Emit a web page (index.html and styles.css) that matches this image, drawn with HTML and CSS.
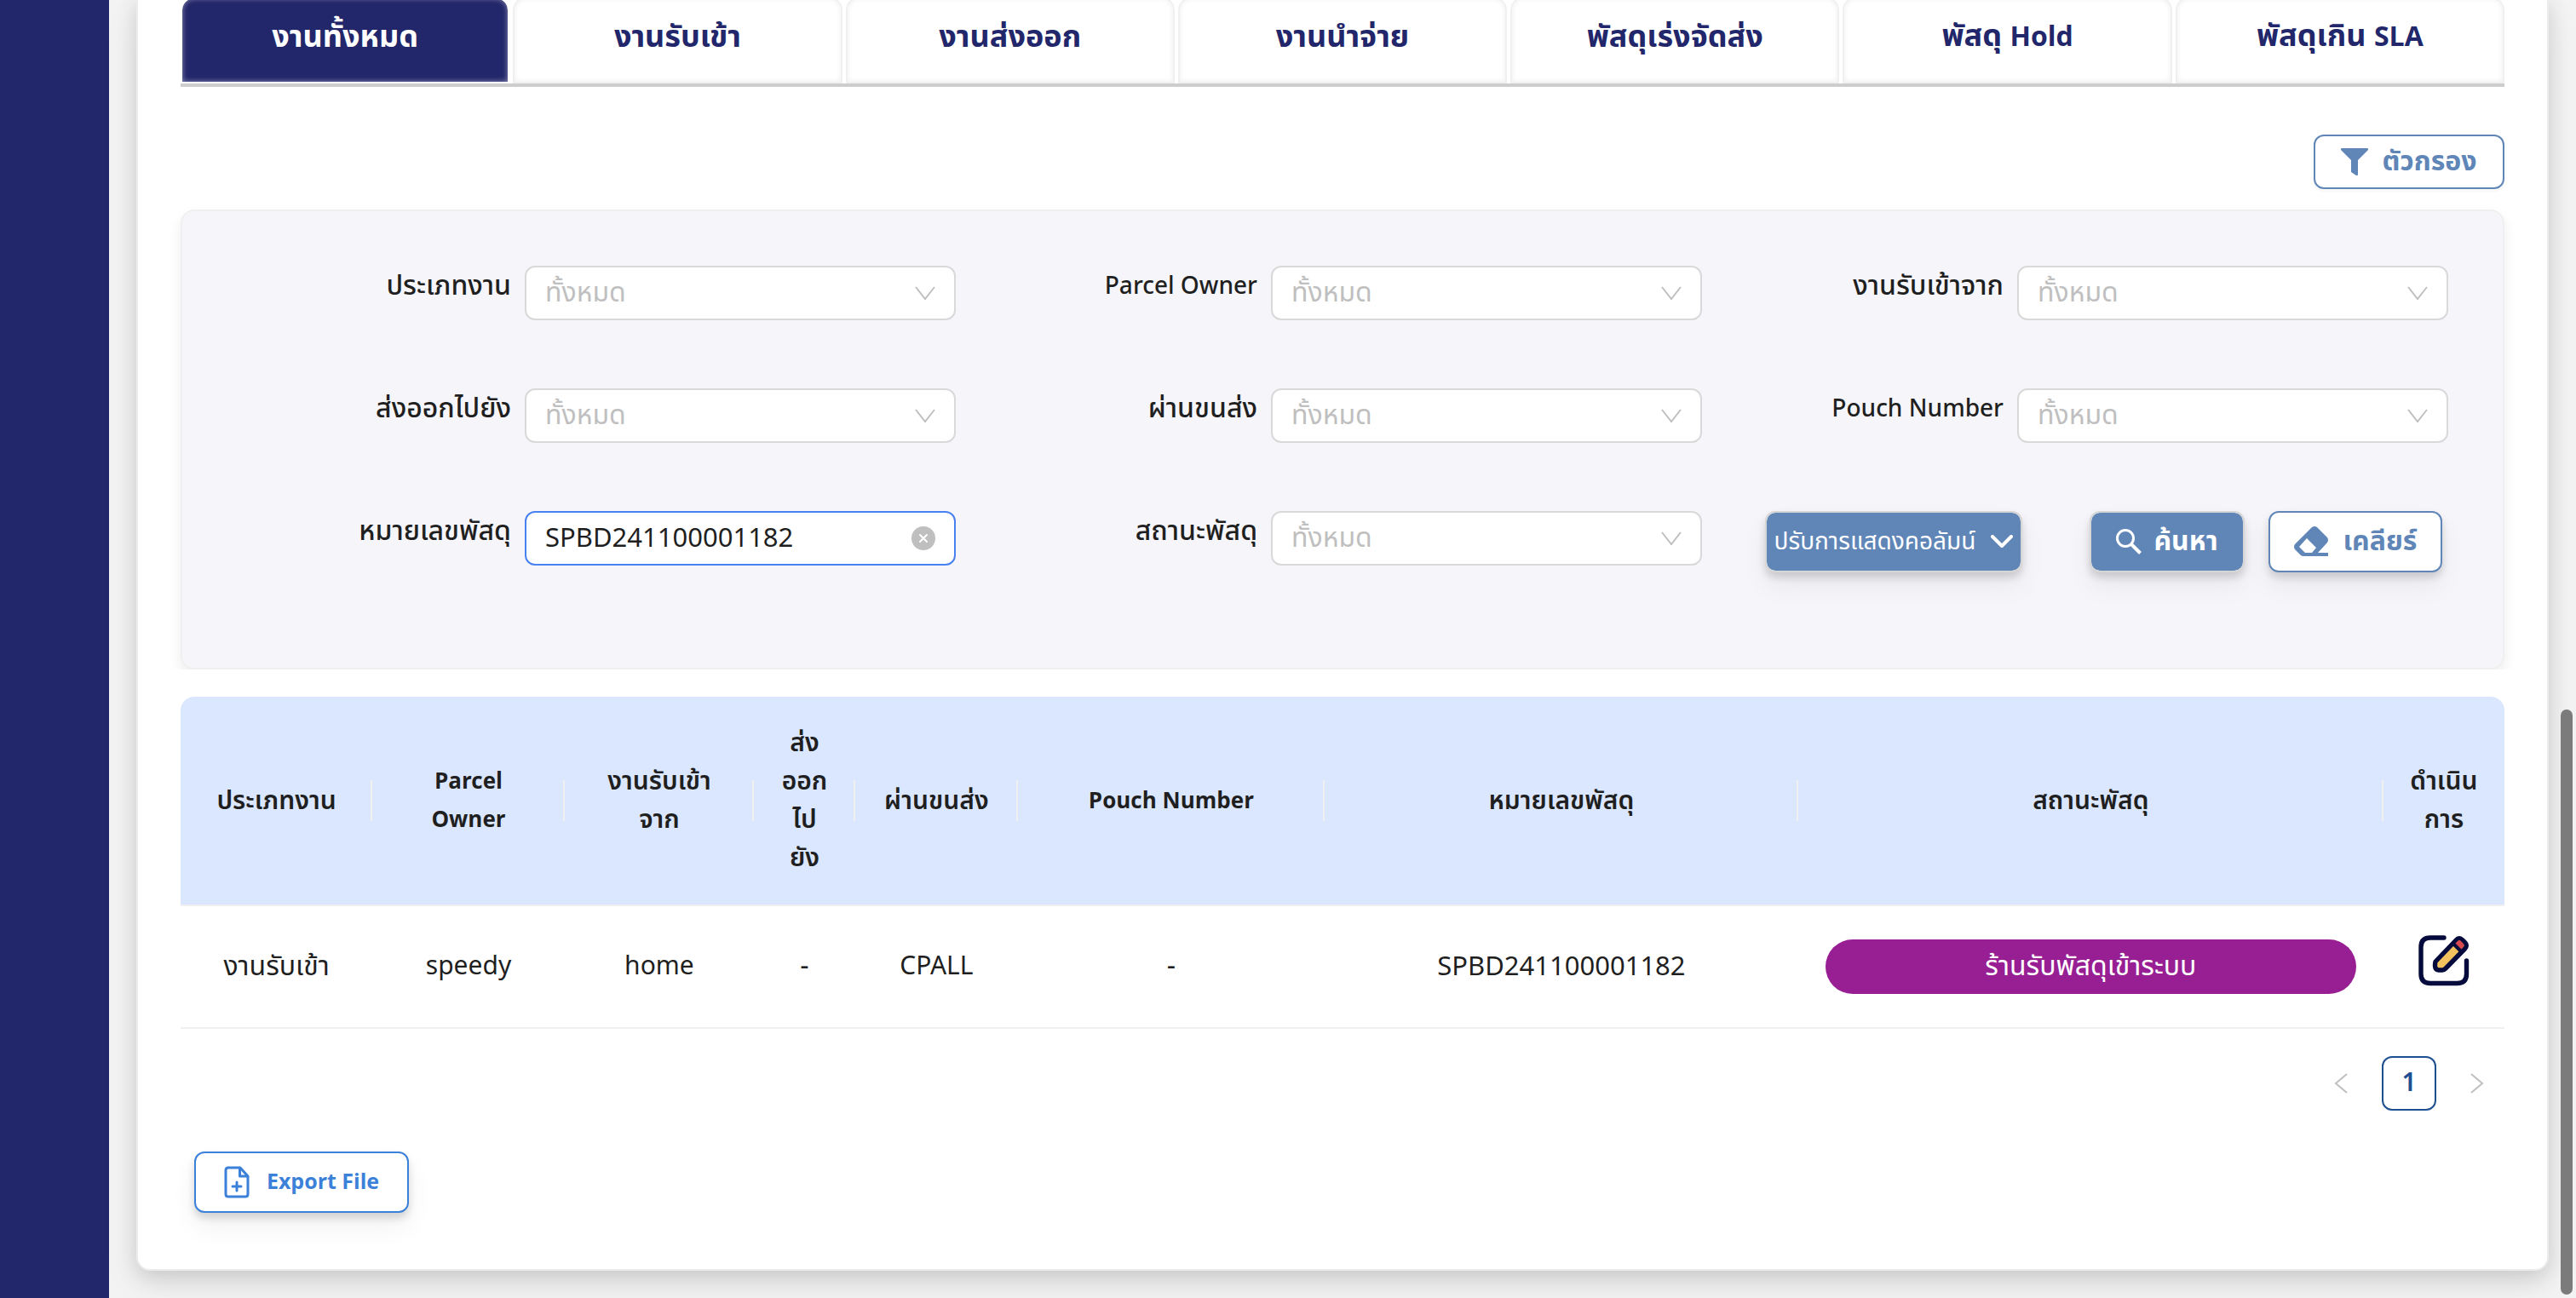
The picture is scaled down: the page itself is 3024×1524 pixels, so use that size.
FILE: index.html
```
<!DOCTYPE html>
<html lang="th">
<head>
<meta charset="utf-8">
<meta name="viewport" content="width=device-width, initial-scale=1">
<title>งานทั้งหมด</title>
<link rel="stylesheet" href="styles.css">
</head>
<body>
<svg class="sprite" aria-hidden="true">
  <symbol id="chevron" viewBox="0 0 24 16"><path d="M1 1 12 15 23 1" fill="none" stroke="currentColor" stroke-width="2"/></symbol>
</svg>
<div class="layout">
  <aside class="sidebar"></aside>
  <main class="content">
    <section class="card">
      <nav class="tabs">
        <button class="tab tab-active" type="button">งานทั้งหมด</button>
        <button class="tab" type="button">งานรับเข้า</button>
        <button class="tab" type="button">งานส่งออก</button>
        <button class="tab" type="button">งานนำจ่าย</button>
        <button class="tab" type="button">พัสดุเร่งจัดส่ง</button>
        <button class="tab" type="button">พัสดุ <span class="latin">Hold</span></button>
        <button class="tab" type="button">พัสดุเกิน <span class="latin">SLA</span></button>
      </nav>

      <div class="toolbar">
        <button class="btn btn-filter" type="button">
          <svg width="32" height="32" viewBox="0 0 32 32"><path fill="currentColor" d="M1 0h30q1 0 1 1v1L20 14v17q0 1-1 1h-1l-6-4V14L0 2V1q0-1 1-1z"/></svg>
          <span>ตัวกรอง</span>
        </button>
      </div>

      <form class="filters">
        <div class="field">
          <label for="job">ประเภทงาน</label>
          <div class="control"><select id="job"><option>ทั้งหมด</option></select><svg class="chevron"><use href="#chevron"/></svg></div>
        </div>
        <div class="field">
          <label for="owner" class="label-latin">Parcel Owner</label>
          <div class="control"><select id="owner"><option>ทั้งหมด</option></select><svg class="chevron"><use href="#chevron"/></svg></div>
        </div>
        <div class="field">
          <label for="from">งานรับเข้าจาก</label>
          <div class="control"><select id="from"><option>ทั้งหมด</option></select><svg class="chevron"><use href="#chevron"/></svg></div>
        </div>
        <div class="field">
          <label for="to">ส่งออกไปยัง</label>
          <div class="control"><select id="to"><option>ทั้งหมด</option></select><svg class="chevron"><use href="#chevron"/></svg></div>
        </div>
        <div class="field">
          <label for="via">ผ่านขนส่ง</label>
          <div class="control"><select id="via"><option>ทั้งหมด</option></select><svg class="chevron"><use href="#chevron"/></svg></div>
        </div>
        <div class="field">
          <label for="pouch" class="label-latin">Pouch Number</label>
          <div class="control"><select id="pouch"><option>ทั้งหมด</option></select><svg class="chevron"><use href="#chevron"/></svg></div>
        </div>
        <div class="field">
          <label for="parcel">หมายเลขพัสดุ</label>
          <div class="control control-focus">
            <input id="parcel" type="text" value="SPBD241100001182">
            <button class="clear" type="button" aria-label="ล้าง"><svg width="28" height="28" viewBox="0 0 28 28"><circle cx="14" cy="14" r="14" fill="#bfbfbf"/><path d="m10 10 8 8m0-8-8 8" stroke="#fff" stroke-width="2" stroke-linecap="round"/></svg></button>
          </div>
        </div>
        <div class="field">
          <label for="status">สถานะพัสดุ</label>
          <div class="control"><select id="status"><option>ทั้งหมด</option></select><svg class="chevron"><use href="#chevron"/></svg></div>
        </div>
        <div class="actions">
          <button class="btn btn-columns" type="button">
            <span>ปรับการแสดงคอลัมน์</span>
            <svg width="26" height="16" viewBox="0 0 26 16"><path d="m2 2 11 11L24 2" fill="none" stroke="currentColor" stroke-width="4" stroke-linecap="round" stroke-linejoin="round"/></svg>
          </button>
          <button class="btn btn-search" type="submit">
            <svg width="30" height="30" viewBox="0 0 30 30"><circle cx="11" cy="11" r="9.5" fill="none" stroke="currentColor" stroke-width="3"/><path d="m18 18 10.500 10.500" stroke="currentColor" stroke-width="4"/></svg>
            <span>ค้นหา</span>
          </button>
          <button class="btn btn-reset" type="reset">
            <svg width="40" height="36" viewBox="0 0 40 36"><path fill="currentColor" fill-rule="evenodd" d="M21 1q3-2 6 0l12 12q2 3 0 6L28 31h12v4H11q-2 0-3-1L1 27q-2-3 0-6zM15 14 6 24l7 7h8l5-6z"/></svg>
            <span>เคลียร์</span>
          </button>
        </div>
      </form>

      <table class="parcels">
        <colgroup>
          <col class="c-job"><col class="c-owner"><col class="c-from"><col class="c-to"><col class="c-via"><col class="c-pouch"><col class="c-parcel"><col class="c-status"><col class="c-action">
        </colgroup>
        <thead>
          <tr>
            <th>ประเภทงาน</th>
            <th class="th-latin">Parcel<br>Owner</th>
            <th>งานรับเข้า<br>จาก</th>
            <th>ส่ง<br>ออก<br>ไป<br>ยัง</th>
            <th>ผ่านขนส่ง</th>
            <th class="th-latin">Pouch Number</th>
            <th>หมายเลขพัสดุ</th>
            <th>สถานะพัสดุ</th>
            <th>ดำเนิน<br>การ</th>
          </tr>
        </thead>
        <tbody>
          <tr>
            <td>งานรับเข้า</td>
            <td class="td-latin">speedy</td>
            <td class="td-latin">home</td>
            <td>-</td>
            <td class="td-latin">CPALL</td>
            <td>-</td>
            <td class="code">SPBD241100001182</td>
            <td><span class="pill">ร้านรับพัสดุเข้าระบบ</span></td>
            <td>
              <button class="edit" type="button" aria-label="แก้ไข">
                <svg width="60" height="60" viewBox="18 18 60 60" stroke-linecap="round" stroke-linejoin="round">
                  <path d="M48 21H32q-11 0-11 11v31.500q0 11 11 11h31.500q11 0 11-11V48" fill="none" stroke="#050a3c" stroke-width="5.400"/>
                  <path d="M38 49 62 24q3.500-4 7.500-.5l3 3q3.500 3.500 0 7.500L50 57q-2 2-4 2h-4q-4 0-4.500-4.500 0-4 .5-5.500z" fill="#f2c25f" stroke="#050a3c" stroke-width="5.400"/>
                  <path d="m61 28 3.500-3.500q1.500-1.500 3 0l3.500 3.500q1.500 2 0 3.500L68 35z" fill="#d94a4e"/>
                  <path d="m60 29 8 8" stroke="#050a3c" stroke-width="4"/>
                </svg>
              </button>
            </td>
          </tr>
        </tbody>
      </table>

      <nav class="pager">
        <button class="page-arrow" type="button" aria-label="ก่อนหน้า"><svg width="16" height="24" viewBox="0 0 16 24"><path d="M15 1 2 12l13 11" fill="none" stroke="currentColor" stroke-width="2"/></svg></button>
        <button class="page" type="button">1</button>
        <button class="page-arrow" type="button" aria-label="ถัดไป"><svg width="16" height="24" viewBox="0 0 16 24"><path d="m1 1 13 11L1 23" fill="none" stroke="currentColor" stroke-width="2"/></svg></button>
      </nav>

      <button class="btn btn-export" type="button">
        <svg width="30" height="38" viewBox="0 0 30 38"><path d="M4 2h15l9 10v21q0 3-3 3H5q-3 0-3-3V5q0-3 3-3zM18.500 2v10H28" fill="none" stroke="currentColor" stroke-width="3" stroke-linejoin="round"/><path d="M15 19v10m-5-5h10" stroke="currentColor" stroke-width="3" stroke-linecap="round"/></svg>
        <span>Export File</span>
      </button>
    </section>
  </main>
</div>
<div class="scroll-thumb"></div>
</body>
</html>
```
FILE: styles.css
```
* { box-sizing: border-box; }

body {
  margin: 0;
  background: #f3f3f3;
  color: #1f1f1f;
  font: 400 32px/45px "Noto Sans Thai", "Noto Sans", sans-serif;
}

button, input, select { font: inherit; color: inherit; }
button { cursor: pointer; }
svg { flex: none; display: block; }
.sprite { position: absolute; width: 0; height: 0; }

.layout { display: flex; min-height: 100vh; }
.sidebar { flex: none; width: 128px; background: #22266a; }
.content { flex: 1; min-width: 0; padding: 0 32px 32px; }

.card {
  padding: 0 50px 66px;
  border: 2px solid #ececec;
  border-top: 0;
  border-radius: 0 0 16px 16px;
  background: #fff;
  box-shadow: 0 8px 24px rgba(0, 0, 0, .14), 0 20px 50px rgba(0, 0, 0, .05);
}

/* Tabs */
.tabs {
  display: flex;
  gap: 4px;
  margin-top: -4px;
  border-bottom: 4px solid #cdcdcd;
}
.tab {
  flex: 1 1 0;
  height: 102px;
  padding: 0 0 6px;
  border: 2px solid #f0f0f0;
  border-radius: 16px 16px 0 0;
  background: #fff;
  box-shadow: inset 0 0 6px rgba(0, 0, 0, .07);
  color: #22266a;
  font-size: 36px;
  font-weight: 700;
}
.tab-active {
  border-color: #fff;
  background: #22266a;
  background-clip: padding-box;
  box-shadow: inset 0 0 6px rgba(255, 255, 255, .5);
  color: #fff;
}
.latin { font-size: 32px; }

/* Buttons */
.btn {
  display: flex;
  align-items: center;
  justify-content: center;
  height: 72px;
  padding: 0;
  border: 2px solid;
  border-radius: 12px;
  font-weight: 700;
}
.toolbar { display: flex; justify-content: flex-end; margin-top: 56px; }
.btn-filter {
  width: 224px;
  height: 64px;
  gap: 16px;
  border-color: #6086b8;
  background: #fff;
  box-shadow: 0 4px 0 rgba(0, 0, 0, .02);
  color: #6086b8;
}
.btn-columns, .btn-search, .btn-reset, .btn-export {
  box-shadow: 0 6px 10px rgba(0, 0, 0, .14), 0 16px 30px rgba(0, 0, 0, .06);
}
.btn-columns, .btn-search { border-color: #d6d6d6; background: #6086b8; background-clip: padding-box; color: #fff; }
.btn-columns { width: 302px; gap: 18px; font-size: 28px; font-weight: 400; }
.btn-search { width: 182px; margin-left: auto; gap: 14px; }
.btn-reset { width: 204px; gap: 18px; border-color: #6086b8; background: #fff; color: #6086b8; }
.btn-export {
  width: 252px;
  margin: 48px 0 0 16px;
  gap: 20px;
  border-color: #3b80d9;
  background: #fff;
  color: #3b80d9;
  font-size: 25px;
}

/* Filter form */
.filters {
  display: grid;
  grid-template-columns: repeat(3, 1fr);
  row-gap: 80px;
  align-items: start;
  margin-top: 24px;
  padding: 64px 64px 112px 32px;
  border: 2px solid #f0f0f0;
  border-radius: 16px;
  background: #f5f5fa;
  box-shadow: 0 8px 16px rgba(0, 0, 0, .08);
  clip-path: inset(-20px -20px 0 -20px);
}
.field {
  display: grid;
  grid-template-columns: 354fr 506fr;
  column-gap: 16px;
}
.field label { padding-top: 2px; font-weight: 500; text-align: right; white-space: nowrap; }
.field .label-latin { font-size: 28px; }
.control {
  display: flex;
  align-items: center;
  height: 64px;
  padding: 0 22px;
  border: 2px solid #d9d9d9;
  border-radius: 12px;
  background: #fff;
}
.control-focus { border-color: #4a81f0; }
.control select, .control input {
  flex: 1;
  min-width: 0;
  height: 60px;
  padding: 0;
  border: 0;
  outline: 0;
  background: none;
  appearance: none;
}
.control select { color: #bfbfbf; }
.control input { font-size: 31px; }
.chevron { width: 24px; height: 16px; color: #bfbfbf; }
.clear { padding: 0; border: 0; background: none; }
.actions { display: flex; gap: 28px; padding: 0 7px 0 74px; }

/* Results */
.parcels {
  width: 100%;
  margin-top: 32px;
  border-spacing: 0;
  table-layout: fixed;
  text-align: center;
}
.c-job { width: 8.25%; }
.c-owner { width: 8.28%; }
.c-from { width: 8.14%; }
.c-to { width: 4.36%; }
.c-via { width: 7%; }
.c-pouch { width: 13.2%; }
.c-parcel { width: 20.38%; }
.c-status { width: 25.18%; }
.c-action { width: 5.21%; }
.parcels th {
  height: 246px;
  padding: 2px 0 0;
  border-bottom: 2px solid #f0f0f0;
  background: linear-gradient(#f0f0f0, #f0f0f0) right center / 2px 48px no-repeat #dbe7ff;
  font-size: 30px;
  font-weight: 600;
}
.parcels th:first-child { border-top-left-radius: 16px; }
.parcels th:last-child { border-top-right-radius: 16px; background: #dbe7ff; }
.parcels .th-latin { font-size: 26px; font-weight: 700; }
.parcels td {
  height: 144px;
  padding: 0 32px;
  border-bottom: 2px solid #f0f0f0;
  white-space: nowrap;
}
.parcels td:last-child { padding: 0; }
.parcels .td-latin { font-size: 30px; }
.parcels .code { font-size: 31px; }
.pill {
  display: block;
  height: 64px;
  border-radius: 32px;
  background: #971f93;
  color: #fff;
  line-height: 64px;
}
.edit {
  display: block;
  margin: 0 auto 14px;
  padding: 0;
  border: 0;
  border-radius: 12px;
  background: none;
  box-shadow: 0 4px 0 rgba(0, 0, 0, .02);
}

/* Pagination */
.pager { display: flex; justify-content: flex-end; gap: 16px; margin-top: 32px; }
.page, .page-arrow {
  display: flex;
  align-items: center;
  justify-content: center;
  width: 64px;
  height: 64px;
  padding: 0;
  border: 0;
  border-radius: 12px;
  background: none;
  color: #bfbfbf;
}
.page { border: 2px solid #1e4f91; color: #1e4f91; font-size: 30px; font-weight: 600; }

.scroll-thumb {
  position: fixed;
  top: 833px;
  right: 4px;
  bottom: 4px;
  width: 14px;
  border-radius: 7px;
  background: #7b7b7b;
}
```
